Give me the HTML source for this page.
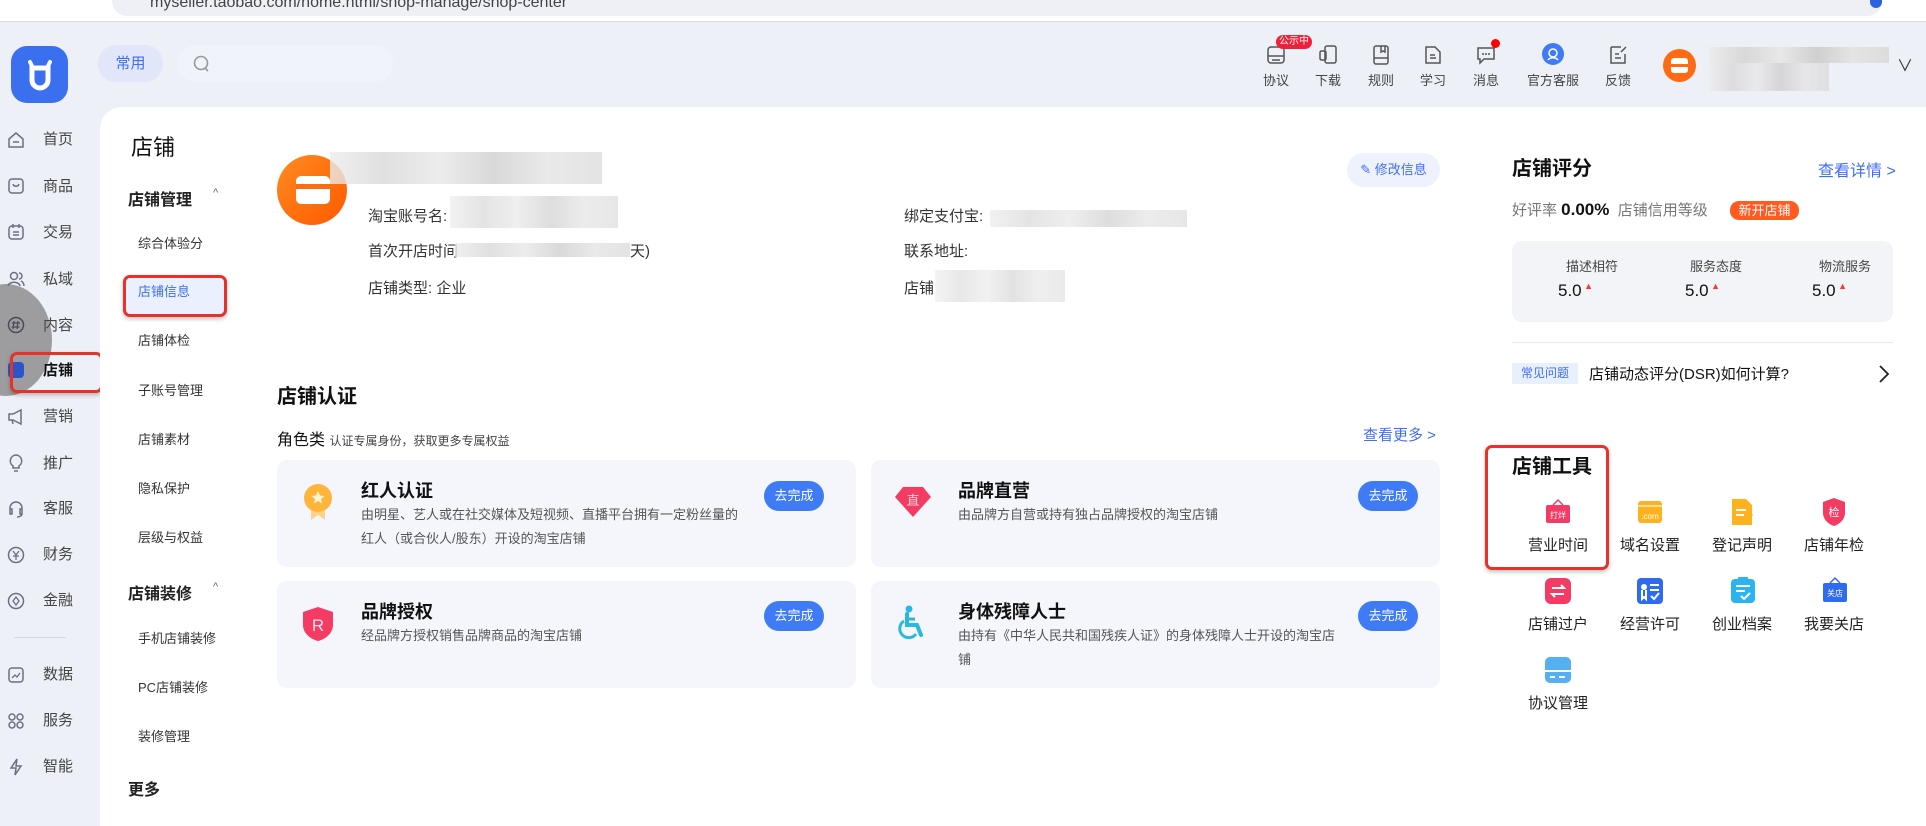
<!DOCTYPE html>
<html><head><meta charset="utf-8"><style>
*{margin:0;padding:0;box-sizing:border-box}
body{width:1926px;height:826px;overflow:hidden;background:#eef0f8;font-family:"Liberation Sans","Noto Sans CJK SC",sans-serif;color:#111;position:relative}
.a{position:absolute;white-space:nowrap}
.nav{position:absolute;left:43px;font-size:15px;color:#444;line-height:20px}
.ni{position:absolute;left:7px;width:18px;height:18px}
.sub{position:absolute;left:138px;font-size:13px;color:#333;line-height:18px}
.tl{position:absolute;font-size:13px;color:#333;text-align:center;width:60px;line-height:16px}
.card{position:absolute;background:#f4f6fc;border-radius:10px}
.ct{position:absolute;font-size:18px;font-weight:bold;color:#111}
.cd{position:absolute;font-size:13px;color:#555;line-height:24px}
.btn{position:absolute;width:60px;height:30px;border-radius:15px;background:#3f7bf5;color:#fff;font-size:13px;text-align:center;line-height:30px}
.tool{position:absolute;width:90px;text-align:center;font-size:15px;color:#222}
.blur{position:absolute;background:linear-gradient(90deg,#ececec,#d8d8d8 20%,#e8e8e8 40%,#cfcfcf 60%,#e4e4e4 80%,#dcdcdc)}
</style></head><body>
<!-- browser bar -->
<div class="a" style="left:0;top:0;width:1926px;height:22px;background:#fff;border-bottom:1px solid #ddd"></div>
<div class="a" style="left:112px;top:-14px;width:1770px;height:30px;background:#eef0f6;border-radius:15px"></div>
<div class="a" style="left:150px;top:-6px;font-size:16px;color:#444">myseller.taobao.com/home.html/shop-manage/shop-center</div>
<div class="a" style="left:1870px;top:0;width:12px;height:8px;background:#2a62e0;border-radius:0 0 6px 6px"></div>

<!-- logo -->
<div class="a" style="left:11px;top:46px;width:57px;height:57px;background:#3a6ff0;border-radius:16px"></div>
<svg class="a" style="left:24px;top:58px" width="32" height="34" viewBox="0 0 32 34"><path d="M6 4 L9 10 M26 4 L23 10" stroke="#fff" stroke-width="4" stroke-linecap="round"/><path d="M8 10 H24 V22 A8 8 0 0 1 8 22 Z" fill="none" stroke="#fff" stroke-width="5"/></svg>
<div class="a" style="left:98px;top:45px;width:65px;height:37px;background:#e1e7f8;border-radius:18px;color:#3f6ef0;font-size:15px;text-align:center;line-height:37px">常用</div>
<div class="a" style="left:178px;top:45px;width:215px;height:37px;background:#f1f3fa;border-radius:18px"></div>
<svg class="a" style="left:192px;top:54px" width="20" height="20"><circle cx="9" cy="9" r="6.5" fill="none" stroke="#999" stroke-width="1.6"/><path d="M13 14l3 3" stroke="#999" stroke-width="1.6"/></svg>

<!-- top right -->
<svg class="a" style="left:1266px;top:45px" width="20" height="20"><rect x="2" y="2" width="16" height="16" rx="3" fill="none" stroke="#555" stroke-width="1.5"/><path d="M2 11h16M6 15h8" stroke="#555" stroke-width="1.5"/></svg>
<div class="a" style="left:1276px;top:35px;background:#f0203a;color:#fff;font-size:10px;border-radius:7px;padding:0 3px;line-height:14px">公示中</div>
<svg class="a" style="left:1318px;top:45px" width="20" height="20"><rect x="7" y="1" width="11" height="17" rx="2" fill="none" stroke="#555" stroke-width="1.5"/><rect x="2" y="6" width="6" height="9" rx="1.5" fill="none" stroke="#555" stroke-width="1.5"/></svg>
<svg class="a" style="left:1371px;top:45px" width="20" height="20"><rect x="3" y="1" width="14" height="18" rx="2" fill="none" stroke="#555" stroke-width="1.5"/><path d="M3 13h14M10 1v6l2-1 2 1V1" stroke="#555" stroke-width="1.5" fill="none"/></svg>
<svg class="a" style="left:1423px;top:45px" width="20" height="20"><path d="M3 2h9l5 5v11H3z" fill="none" stroke="#555" stroke-width="1.5"/><path d="M7 10h5M7 13h6" stroke="#555" stroke-width="1.5"/></svg>
<svg class="a" style="left:1476px;top:45px" width="22" height="20"><path d="M2 3h16v11H8l-4 4v-4H2z" fill="none" stroke="#555" stroke-width="1.5"/><circle cx="7" cy="9" r="1" fill="#555"/><circle cx="10" cy="9" r="1" fill="#555"/><circle cx="13" cy="9" r="1" fill="#555"/></svg>
<div class="a" style="left:1491px;top:39px;width:9px;height:9px;border-radius:50%;background:#f00"></div>
<div class="a" style="left:1542px;top:43px;width:22px;height:22px;border-radius:50%;background:#3f7bf5"></div>
<svg class="a" style="left:1546px;top:47px" width="14" height="14"><circle cx="7" cy="6" r="4" fill="none" stroke="#fff" stroke-width="1.5"/><path d="M2 13c2-3 8-3 10 0" stroke="#fff" stroke-width="1.5" fill="none"/></svg>
<svg class="a" style="left:1608px;top:45px" width="20" height="20"><path d="M3 2h10M3 2v16h14V9" fill="none" stroke="#555" stroke-width="1.5"/><path d="M7 9h4M7 13h6M13 7l5-5" stroke="#555" stroke-width="1.5"/></svg>
<div class="a" style="left:1256px;top:70px;font-size:13px;color:#444;width:40px;text-align:center">协议</div>
<div class="a" style="left:1308px;top:70px;font-size:13px;color:#444;width:40px;text-align:center">下载</div>
<div class="a" style="left:1361px;top:70px;font-size:13px;color:#444;width:40px;text-align:center">规则</div>
<div class="a" style="left:1413px;top:70px;font-size:13px;color:#444;width:40px;text-align:center">学习</div>
<div class="a" style="left:1466px;top:70px;font-size:13px;color:#444;width:40px;text-align:center">消息</div>
<div class="a" style="left:1523px;top:70px;font-size:13px;color:#444;width:60px;text-align:center">官方客服</div>
<div class="a" style="left:1598px;top:70px;font-size:13px;color:#444;width:40px;text-align:center">反馈</div>
<div class="a" style="left:1663px;top:49px;width:33px;height:33px;border-radius:50%;background:#ff6a12"></div>
<div class="a" style="left:1671px;top:58px;width:17px;height:15px;background:#fff;border-radius:3px"></div>
<div class="a" style="left:1671px;top:64px;width:17px;height:3px;background:#ff6a12"></div>
<div class="blur" style="left:1709px;top:47px;width:180px;height:16px"></div>
<div class="blur" style="left:1709px;top:63px;width:120px;height:28px;opacity:.8"></div>
<div class="a" style="left:1897px;top:52px;font-size:16px;color:#333">∨</div>

<!-- left nav -->
<div class="a" style="left:-40px;top:284px;width:92px;height:112px;border-radius:50%;background:#8e8e90;opacity:.85"></div>
<svg class="ni" style="top:131px" viewBox="0 0 18 18"><path d="M2 8L9 2l7 6v8H2z M6 11h6" fill="none" stroke="#6b7080" stroke-width="1.5"/></svg><div class="nav" style="top:130px">首页</div>
<svg class="ni" style="top:177px" viewBox="0 0 18 18"><rect x="2" y="2" width="14" height="14" rx="3" fill="none" stroke="#6b7080" stroke-width="1.5"/><path d="M6 7c1 3 5 3 6 0" stroke="#6b7080" stroke-width="1.5" fill="none"/></svg><div class="nav" style="top:177px">商品</div>
<svg class="ni" style="top:223px" viewBox="0 0 18 18"><rect x="2" y="3" width="14" height="13" rx="3" fill="none" stroke="#6b7080" stroke-width="1.5"/><path d="M6 1v4M12 1v4M6 9h6M6 12h6" stroke="#6b7080" stroke-width="1.5"/></svg><div class="nav" style="top:223px">交易</div>
<svg class="ni" style="top:270px" viewBox="0 0 18 18"><circle cx="7" cy="6" r="3.5" fill="none" stroke="#6b7080" stroke-width="1.5"/><path d="M1 16c1-5 11-5 12 0M12 3a3 3 0 010 6M14 11c2 1 3 3 3 5" stroke="#6b7080" stroke-width="1.5" fill="none"/></svg><div class="nav" style="top:270px">私域</div>
<svg class="ni" style="top:316px" viewBox="0 0 18 18"><circle cx="9" cy="9" r="7.5" fill="none" stroke="#4a4d57" stroke-width="1.5"/><path d="M7 5l-1 8M11 5l-1 8M5 7h8M4.5 11h8" stroke="#4a4d57" stroke-width="1.3"/></svg><div class="nav" style="top:316px">内容</div>
<div class="a" style="left:8px;top:362px;width:16px;height:16px;border-radius:4px;background:#2b55c8"></div><div class="nav" style="top:361px;color:#111;font-weight:bold">店铺</div>
<div class="a" style="left:10px;top:352px;width:93px;height:41px;border:3px solid #e5322a;border-radius:7px;box-shadow:0 2px 4px rgba(0,0,0,.25)"></div>
<svg class="ni" style="top:408px" viewBox="0 0 18 18"><path d="M2 6h4l8-4v14l-8-4H2z M5 12l1 4" fill="none" stroke="#6b7080" stroke-width="1.5"/></svg><div class="nav" style="top:407px">营销</div>
<svg class="ni" style="top:454px" viewBox="0 0 18 18"><path d="M9 1a6 6 0 00-3 11v2h6v-2A6 6 0 009 1zM7 17h4" fill="none" stroke="#6b7080" stroke-width="1.5"/></svg><div class="nav" style="top:454px">推广</div>
<svg class="ni" style="top:500px" viewBox="0 0 18 18"><path d="M3 10V8a6 6 0 0112 0v2M3 9h2v5H3zM13 9h2v5h-2zM15 14c0 2-3 3-5 3" fill="none" stroke="#6b7080" stroke-width="1.5"/></svg><div class="nav" style="top:499px">客服</div>
<svg class="ni" style="top:546px" viewBox="0 0 18 18"><circle cx="9" cy="9" r="7.5" fill="none" stroke="#6b7080" stroke-width="1.5"/><path d="M6 5l3 4 3-4M9 9v5M6 10h6" stroke="#6b7080" stroke-width="1.3" fill="none"/></svg><div class="nav" style="top:545px">财务</div>
<svg class="ni" style="top:592px" viewBox="0 0 18 18"><circle cx="9" cy="9" r="7.5" fill="none" stroke="#6b7080" stroke-width="1.5"/><path d="M9 5l3 4-3 4-3-4z" stroke="#6b7080" stroke-width="1.3" fill="none"/></svg><div class="nav" style="top:591px">金融</div>
<div class="a" style="left:14px;top:637px;width:52px;height:1px;background:#d4d7e2"></div>
<svg class="ni" style="top:666px" viewBox="0 0 18 18"><rect x="2" y="2" width="14" height="14" rx="3" fill="none" stroke="#6b7080" stroke-width="1.5"/><path d="M5 12l3-3 2 2 3-4" stroke="#6b7080" stroke-width="1.3" fill="none"/></svg><div class="nav" style="top:665px">数据</div>
<svg class="ni" style="top:712px" viewBox="0 0 18 18"><g fill="none" stroke="#6b7080" stroke-width="1.5"><circle cx="5" cy="5" r="3"/><circle cx="13" cy="5" r="3"/><circle cx="5" cy="13" r="3"/><circle cx="13" cy="13" r="3"/></g></svg><div class="nav" style="top:711px">服务</div>
<svg class="ni" style="top:758px" viewBox="0 0 18 18"><path d="M10 1L4 10h5l-1 7 6-9H9z" fill="none" stroke="#6b7080" stroke-width="1.5"/></svg><div class="nav" style="top:757px">智能</div>

<!-- content panel -->
<div class="a" style="left:100px;top:107px;width:1826px;height:719px;background:#fff;border-radius:22px 0 0 0"></div>
<div class="a" style="left:131px;top:130px;font-size:22px;color:#111">店铺</div>
<div class="a" style="left:128px;top:186px;font-size:16px;font-weight:bold;color:#222">店铺管理</div><div class="a" style="left:213px;top:187px;font-size:11px;color:#666">^</div>
<div class="sub" style="top:235px">综合体验分</div>
<div class="a" style="left:123px;top:275px;width:104px;height:42px;background:#eaf0fd;border:3px solid #e5322a;border-radius:7px;box-shadow:0 2px 4px rgba(0,0,0,.25)"></div>
<div class="sub" style="top:283px;color:#3f6ef0">店铺信息</div>
<div class="sub" style="top:332px">店铺体检</div>
<div class="sub" style="top:382px">子账号管理</div>
<div class="sub" style="top:431px">店铺素材</div>
<div class="sub" style="top:480px">隐私保护</div>
<div class="sub" style="top:529px">层级与权益</div>
<div class="a" style="left:128px;top:580px;font-size:16px;font-weight:bold;color:#222">店铺装修</div><div class="a" style="left:213px;top:581px;font-size:11px;color:#666">^</div>
<div class="sub" style="top:630px">手机店铺装修</div>
<div class="sub" style="top:679px">PC店铺装修</div>
<div class="sub" style="top:728px">装修管理</div>
<div class="a" style="left:128px;top:776px;font-size:16px;font-weight:bold;color:#222">更多</div>

<!-- shop info -->
<div class="a" style="left:277px;top:155px;width:70px;height:70px;border-radius:50%;background:linear-gradient(135deg,#ff8a1f,#ff5a00)"></div>
<div class="a" style="left:296px;top:176px;width:34px;height:28px;background:#fff;border-radius:5px"></div>
<div class="a" style="left:296px;top:184px;width:34px;height:5px;background:#ff6a12"></div>
<div class="blur" style="left:330px;top:152px;width:272px;height:32px;opacity:.8"></div>
<div class="a" style="left:368px;top:205px;font-size:15px;color:#333">淘宝账号名:</div><div class="blur" style="left:450px;top:196px;width:168px;height:32px;opacity:.7"></div>
<div class="a" style="left:368px;top:240px;font-size:15px;color:#333">首次开店时间</div><div class="blur" style="left:455px;top:243px;width:175px;height:14px;opacity:.8"></div><div class="a" style="left:630px;top:240px;font-size:15px;color:#333">天)</div>
<div class="a" style="left:368px;top:277px;font-size:15px;color:#333">店铺类型: 企业</div>
<div class="a" style="left:904px;top:205px;font-size:15px;color:#333">绑定支付宝:</div><div class="blur" style="left:990px;top:210px;width:197px;height:17px;opacity:.7"></div>
<div class="a" style="left:904px;top:240px;font-size:15px;color:#333">联系地址:</div>
<div class="a" style="left:904px;top:277px;font-size:15px;color:#333">店铺</div><div class="blur" style="left:935px;top:270px;width:130px;height:32px;opacity:.6"></div>
<div class="a" style="left:1347px;top:153px;width:93px;height:34px;border-radius:17px;background:#edf2fd;color:#3f6ef0;font-size:13px;line-height:34px;text-align:center">✎ 修改信息</div>

<div class="a" style="left:277px;top:380px;font-size:20px;font-weight:bold">店铺认证</div>
<div class="a" style="left:277px;top:426px;font-size:16px;color:#111">角色类 <span style="font-size:12px;color:#444">认证专属身份，获取更多专属权益</span></div>
<div class="a" style="left:1363px;top:424px;font-size:15px;color:#3f6ef0">查看更多 &gt;</div>

<div class="card" style="left:277px;top:460px;width:579px;height:107px"></div>
<div class="card" style="left:871px;top:460px;width:569px;height:107px"></div>
<div class="card" style="left:277px;top:581px;width:579px;height:107px"></div>
<div class="card" style="left:871px;top:581px;width:569px;height:107px"></div>
<svg class="a" style="left:303px;top:482px" width="30" height="40"><path d="M8 20v18l7-5 7 5V20z" fill="#ffd28a"/><circle cx="15" cy="16" r="14" fill="#ffb53a"/><path d="M15 9l2 4.5 4.5.5-3.5 3 1 4.5-4-2.5-4 2.5 1-4.5-3.5-3 4.5-.5z" fill="#fff3d0"/></svg>
<div class="ct" style="left:361px;top:477px">红人认证</div>
<div class="cd" style="left:361px;top:503px">由明星、艺人或在社交媒体及短视频、直播平台拥有一定粉丝量的<br>红人（或合伙人/股东）开设的淘宝店铺</div>
<div class="btn" style="left:764px;top:481px">去完成</div>
<svg class="a" style="left:895px;top:486px" width="36" height="32"><path d="M8 1h20l8 10-18 20L0 11z" fill="#f33b63"/><text x="18" y="19" font-size="13" fill="#ffd0d8" text-anchor="middle" font-family="Noto Sans CJK SC">直</text></svg>
<div class="ct" style="left:958px;top:477px">品牌直营</div>
<div class="cd" style="left:958px;top:503px">由品牌方自营或持有独占品牌授权的淘宝店铺</div>
<div class="btn" style="left:1358px;top:481px">去完成</div>
<svg class="a" style="left:302px;top:606px" width="32" height="36"><path d="M16 1l15 5v13c0 8-7 14-15 16C8 33 1 27 1 19V6z" fill="#f33b63"/><text x="16" y="25" font-size="17" fill="#ffe0e6" text-anchor="middle">R</text></svg>
<div class="ct" style="left:361px;top:598px">品牌授权</div>
<div class="cd" style="left:361px;top:624px">经品牌方授权销售品牌商品的淘宝店铺</div>
<div class="btn" style="left:764px;top:601px">去完成</div>
<svg class="a" style="left:898px;top:605px" width="32" height="36"><circle cx="11" cy="4" r="3.5" fill="#2cb8dc"/><path d="M9 9v11h10l4 10" stroke="#2cb8dc" stroke-width="4" fill="none" stroke-linecap="round"/><path d="M9 14h8" stroke="#2cb8dc" stroke-width="3"/><path d="M6 16a9 9 0 1012 13" stroke="#2cb8dc" stroke-width="3" fill="none"/></svg>
<div class="ct" style="left:958px;top:598px">身体残障人士</div>
<div class="cd" style="left:958px;top:624px">由持有《中华人民共和国残疾人证》的身体残障人士开设的淘宝店<br>铺</div>
<div class="btn" style="left:1358px;top:601px">去完成</div>

<!-- right panel -->
<div class="a" style="left:1512px;top:152px;font-size:20px;font-weight:bold">店铺评分</div>
<div class="a" style="left:1818px;top:157px;font-size:16px;color:#3f6ef0">查看详情 &gt;</div>
<div class="a" style="left:1512px;top:199px;font-size:15px;color:#777">好评率 <b style="color:#111;font-size:17px">0.00%</b> &nbsp;店铺信用等级</div>
<div class="a" style="left:1730px;top:201px;width:69px;height:19px;border-radius:9px;background:#ff5a1f;color:#fff;font-size:13px;line-height:19px;text-align:center">新开店铺</div>
<div class="a" style="left:1512px;top:241px;width:381px;height:81px;border-radius:10px;background:#f3f4f8"></div>
<div class="a" style="left:1552px;top:256px;width:80px;text-align:center;font-size:13px;color:#444">描述相符</div>
<div class="a" style="left:1676px;top:256px;width:80px;text-align:center;font-size:13px;color:#444">服务态度</div>
<div class="a" style="left:1805px;top:256px;width:80px;text-align:center;font-size:13px;color:#444">物流服务</div>
<div class="a" style="left:1558px;top:281px;font-size:17px;color:#111">5.0<span style="color:#f33;font-size:9px;vertical-align:top"> ▲</span></div>
<div class="a" style="left:1685px;top:281px;font-size:17px;color:#111">5.0<span style="color:#f33;font-size:9px;vertical-align:top"> ▲</span></div>
<div class="a" style="left:1812px;top:281px;font-size:17px;color:#111">5.0<span style="color:#f33;font-size:9px;vertical-align:top"> ▲</span></div>
<div class="a" style="left:1512px;top:342px;width:381px;height:1px;background:#e8eaf0"></div>
<div class="a" style="left:1512px;top:363px;width:66px;height:21px;background:#e8effd;color:#3f6ef0;font-size:12px;line-height:21px;text-align:center">常见问题</div>
<div class="a" style="left:1589px;top:363px;font-size:15px;color:#111">店铺动态评分(DSR)如何计算?</div>
<svg class="a" style="left:1878px;top:364px" width="12" height="20"><path d="M2 2l8 8-8 8" stroke="#222" stroke-width="1.8" fill="none"/></svg>

<div class="a" style="left:1512px;top:450px;font-size:20px;font-weight:bold">店铺工具</div>
<div class="a" style="left:1485px;top:445px;width:124px;height:125px;border:3px solid #e5322a;border-radius:7px;box-shadow:0 2px 4px rgba(0,0,0,.25)"></div>
<!-- tools -->
<svg class="a" style="left:1545px;top:498px" width="26" height="28"><path d="M8 7l5-5 5 5" stroke="#f33b63" stroke-width="1.5" fill="none"/><rect x="1" y="7" width="24" height="18" rx="2" fill="#f33b63"/><text x="13" y="20" font-size="8" fill="#fff" text-anchor="middle" font-family="Noto Sans CJK SC">打烊</text></svg>
<svg class="a" style="left:1637px;top:500px" width="26" height="24"><rect x="1" y="1" width="24" height="22" rx="3" fill="#ffb21e"/><rect x="1" y="5" width="24" height="2" fill="#ffe0a0"/><text x="13" y="19" font-size="8" fill="#fff" text-anchor="middle">.com</text></svg>
<svg class="a" style="left:1730px;top:498px" width="26" height="28"><path d="M2 1h14l6 6v20H2z" fill="#ffb21e"/><path d="M6 12h10M6 17h8" stroke="#fff" stroke-width="2"/><path d="M14 24l8-8" stroke="#ffb21e" stroke-width="3"/></svg>
<svg class="a" style="left:1822px;top:497px" width="24" height="30"><path d="M12 1l11 4v11c0 6-5 11-11 13C6 27 1 22 1 16V5z" fill="#f33b63"/><text x="12" y="19" font-size="11" fill="#fff" text-anchor="middle" font-family="Noto Sans CJK SC">检</text></svg>
<div class="tool" style="left:1513px;top:534px">营业时间</div>
<div class="tool" style="left:1605px;top:534px">域名设置</div>
<div class="tool" style="left:1697px;top:534px">登记声明</div>
<div class="tool" style="left:1789px;top:534px">店铺年检</div>
<svg class="a" style="left:1545px;top:578px" width="26" height="26"><rect x="0" y="0" width="26" height="26" rx="6" fill="#f33b63"/><path d="M7 10h12l-3-3M19 16H7l3 3" stroke="#fff" stroke-width="2" fill="none"/></svg>
<svg class="a" style="left:1637px;top:578px" width="26" height="26"><rect x="0" y="0" width="26" height="26" rx="4" fill="#2f6bf0"/><circle cx="7" cy="9" r="3" fill="#fff"/><path d="M5 12v9l2-2 2 2v-9M13 7h9M13 12h9M14 18l3 3 5-6" stroke="#fff" stroke-width="2" fill="none"/></svg>
<svg class="a" style="left:1730px;top:576px" width="26" height="28"><rect x="1" y="3" width="24" height="24" rx="4" fill="#2cb4f0"/><rect x="8" y="1" width="10" height="4" rx="1" fill="#2cb4f0"/><path d="M6 10h14M6 15h9M11 20l3 3 6-6" stroke="#fff" stroke-width="2" fill="none"/></svg>
<svg class="a" style="left:1822px;top:576px" width="26" height="28"><path d="M8 7l5-5 5 5" stroke="#2f6bf0" stroke-width="1.5" fill="none"/><rect x="1" y="7" width="24" height="19" rx="2" fill="#2f6bf0"/><text x="13" y="20" font-size="8" fill="#fff" text-anchor="middle" font-family="Noto Sans CJK SC">关店</text></svg>
<div class="tool" style="left:1513px;top:613px">店铺过户</div>
<div class="tool" style="left:1605px;top:613px">经营许可</div>
<div class="tool" style="left:1697px;top:613px">创业档案</div>
<div class="tool" style="left:1789px;top:613px">我要关店</div>
<svg class="a" style="left:1545px;top:657px" width="26" height="26"><rect x="0" y="0" width="26" height="26" rx="5" fill="#55b0f2"/><rect x="0" y="13" width="26" height="2" fill="#fff"/><path d="M5 20h5M14 20h6" stroke="#fff" stroke-width="2"/></svg>
<div class="tool" style="left:1513px;top:692px">协议管理</div>
</body></html>
